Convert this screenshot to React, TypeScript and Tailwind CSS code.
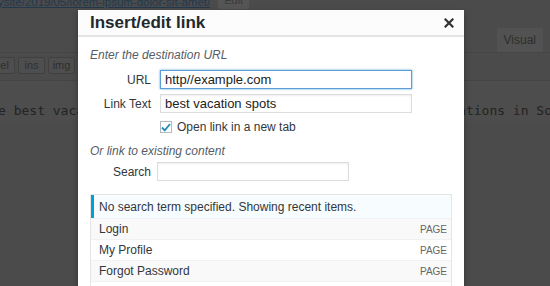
import React from "react";

const rows = ["Login", "My Profile", "Forgot Password", "Contact"];

function CloseIcon() {
  return (
    <svg width="10" height="10" viewBox="0 0 10 10">
      <path d="M1.5 1.5 L8.5 8.5 M8.5 1.5 L1.5 8.5" stroke="#333" strokeWidth="2.2" strokeLinecap="square" />
    </svg>
  );
}

function CheckIcon() {
  return (
    <svg width="10" height="9" viewBox="0 0 10 9">
      <path d="M1 4.5 L3.8 7.3 L9 1" fill="none" stroke="#1e8cbe" strokeWidth="1.8" />
    </svg>
  );
}

function Editor() {
  return (
    <div className="h-full w-full overflow-hidden bg-[#4b4b4b] font-['Liberation_Sans',sans-serif]">
      <div className="flex h-[10px] items-start gap-[8px]">
        <span className="-mt-[6px] -ml-[2px] text-[11.5px] text-[#22384f] underline">
          ysite/2019/05/lorem-ipsum-dolor-sit-amet/
        </span>
        <span className="-mt-[8px] rounded-[2px] bg-[#555] px-[6px] text-[11px] text-[#3a3a3a]">Edit</span>
      </div>
      <div className="flex h-[42px] justify-end pr-[7px] pt-[18px]">
        <div className="flex h-[24px] items-center rounded-t-[2px] bg-[#525252] px-[7px] text-[12px] text-[#2e2e2e]">
          Visual
        </div>
      </div>
      <div className="-ml-[12px] flex h-[28px] items-start gap-[3px] border-t border-[#454545] pt-[4px]">
        {["del", "ins", "img"].map((b) => (
          <span
            key={b}
            className="flex h-[17px] w-[27px] items-center justify-center rounded-[2px] border border-[#404040] bg-[#4e4e4e] text-[11px] text-[#2f2f2f]"
          >
            {b}
          </span>
        ))}
      </div>
      <div className="border-t border-[#454545] bg-[#4d4d4d] pt-[20px]">
        <div className="flex justify-between whitespace-nowrap font-['DejaVu_Sans_Mono',monospace] text-[13px] text-[#232323]">
          <span className="-ml-[2px]">e best vacatio</span>
          <span className="-mr-[2px]">inations in So</span>
        </div>
      </div>
    </div>
  );
}

export default function App() {
  return (
    <div className="relative h-[286px] w-[550px] overflow-hidden">
      <Editor />

      <div className="absolute left-[78px] top-[10px] h-[300px] w-[386px] bg-white font-['Liberation_Sans',sans-serif] text-[#32373c] shadow-[0_3px_6px_rgba(0,0,0,0.3)]">
        <div className="flex h-[27px] items-center justify-between border-b-2 border-[#e5e5e5] bg-[#fcfcfc] pl-[12px] pr-[10px]">
          <h1 className="pt-[1px] text-[17px] font-semibold text-[#23282d]">Insert/edit link</h1>
          <CloseIcon />
        </div>

        <div className="px-[12px] pt-[9px] text-[12px]">
          <p className="italic text-[#555d66]">Enter the destination URL</p>

          <div className="mt-[6px] flex flex-col gap-[5px]">
            <div className="flex items-center">
              <label className="w-[62px] pr-[1px] text-right text-[12px]">URL</label>
              <div className="ml-[8px] flex h-[19px] w-[252px] items-center border border-[#5b9dd9] px-[4px] text-[13px] text-[#222] shadow-[0_0_2px_rgba(30,140,190,0.8)]">
                http//example.com
              </div>
            </div>
            <div className="flex items-center">
              <label className="w-[62px] pr-[1px] text-right text-[12px]">Link Text</label>
              <div className="ml-[8px] flex h-[19px] w-[252px] items-center border border-[#ddd] px-[4px] text-[13px] text-[#222] shadow-[inset_0_1px_2px_rgba(0,0,0,0.07)]">
                best vacation spots
              </div>
            </div>
            <div className="flex items-center pl-[70px]">
              <span className="flex h-[12px] w-[12px] items-center justify-center border border-[#b4b9be] bg-white">
                <CheckIcon />
              </span>
              <span className="ml-[5px] text-[12px]">Open link in a new tab</span>
            </div>
          </div>

          <p className="mt-[6px] italic text-[#555d66]">Or link to existing content</p>

          <div className="mt-[2px] flex items-center">
            <label className="w-[62px] pr-[1px] text-right text-[12px]">Search</label>
            <div className="ml-[5px] h-[19px] w-[192px] border border-[#ddd] shadow-[inset_0_1px_2px_rgba(0,0,0,0.07)]" />
          </div>

          <div className="mt-[13px] border border-[#e5e5e5]">
            <div className="flex h-[23px] items-center border-l-[3px] border-[#00a0d2] bg-[#f7fcfe] pl-[5px] text-[12px] text-[#32373c]">
              No search term specified. Showing recent items.
            </div>
            {rows.map((r, i) => (
              <div
                key={r}
                className={`flex h-[21px] items-center justify-between border-t border-[#f1f1f1] pl-[8px] pr-[4px] ${
                  i % 2 === 0 ? "bg-[#f9f9f9]" : "bg-white"
                }`}
              >
                <span className="text-[12px] text-[#32373c]">{r}</span>
                <span className="text-[10px] uppercase text-[#666]">Page</span>
              </div>
            ))}
          </div>
        </div>
      </div>
    </div>
  );
}
